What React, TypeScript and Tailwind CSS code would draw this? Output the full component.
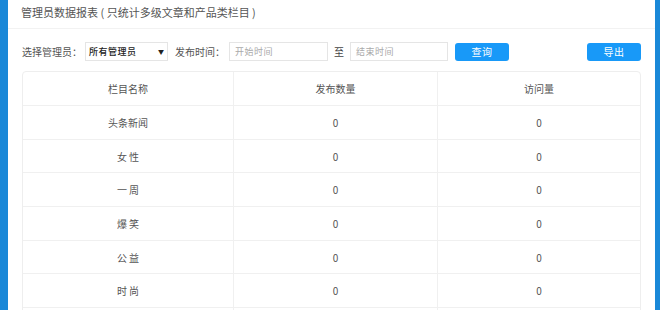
import React from "react";

const rows = [
  ["头条新闻", "0", "0"],
  ["女 性", "0", "0"],
  ["一 周", "0", "0"],
  ["爆 笑", "0", "0"],
  ["公 益", "0", "0"],
  ["时 尚", "0", "0"],
  ["", "", ""],
];

export default function App() {
  return (
    <div
      className="flex h-[310px] w-[660px] overflow-hidden bg-white"
      style={{ fontFamily: '"Noto Sans CJK SC", "Noto Sans", sans-serif' }}
    >
      <div className="w-[8px] shrink-0 bg-[#1a88d8]" />
      <div className="flex min-w-0 flex-1 flex-col bg-white">
        <div className="flex h-[29px] shrink-0 items-center border-b border-[#f2f2f2] pb-[4px] pl-[13px] text-[11px] text-[#555]">
          管理员数据报表 ( 只统计多级文章和产品类栏目 )
        </div>
        <div className="mt-[13px] flex h-[19px] shrink-0 items-center pl-[14px] pr-[14px] text-[10px] text-[#555]">
          <span className="w-[63px]">选择管理员：</span>
          <div className="flex h-[19px] w-[83px] items-center justify-between border border-[#e5e5e5] pl-[3px] pr-[3px] text-[9px] font-medium text-[#222]">
            <span className="tracking-[0.5px]">所有管理员</span>
            <span className="text-[6px]">▼</span>
          </div>
          <span className="ml-[7px] w-[54px]">发布时间：</span>
          <div className="flex h-[19px] w-[99px] items-center border border-[#e5e5e5] pl-[5px] text-[9px] tracking-[0.5px] text-[#aaa]">
            开始时间
          </div>
          <span className="ml-[6px] w-[16px] text-[#444]">至</span>
          <div className="flex h-[19px] w-[98px] items-center border border-[#e5e5e5] pl-[5px] text-[9px] tracking-[0.5px] text-[#aaa]">
            结束时间
          </div>
          <button className="ml-[7px] flex h-[18px] w-[54px] items-center justify-center rounded-[3px] bg-[#1899f8] text-[10px] tracking-[0.5px] text-white">
            查询
          </button>
          <button className="ml-auto flex h-[18px] w-[54px] items-center justify-center rounded-[3px] bg-[#1899f8] text-[10px] tracking-[0.5px] text-white">
            导出
          </button>
        </div>
        <div className="ml-[14px] mt-[10px] w-[619px] shrink-0 rounded-t-[4px] border border-[#eeeeee] text-[10px] text-[#555]">
          <div className="flex h-[34px] items-center border-b border-[#f0f0f0]">
            <div className="flex h-full w-[211px] items-center justify-center border-r border-[#f0f0f0]">栏目名称</div>
            <div className="flex h-full w-[204px] items-center justify-center border-r border-[#f0f0f0]">发布数量</div>
            <div className="flex h-full flex-1 items-center justify-center">访问量</div>
          </div>
          {rows.map((r, i) => (
            <div key={i} className="flex h-[33.7px] items-center border-b border-[#f0f0f0]">
              <div className="flex h-full w-[211px] items-center justify-center border-r border-[#f0f0f0] whitespace-pre">{r[0]}</div>
              <div className="flex h-full w-[204px] items-center justify-center border-r border-[#f0f0f0]">{r[1]}</div>
              <div className="flex h-full flex-1 items-center justify-center">{r[2]}</div>
            </div>
          ))}
        </div>
      </div>
      <div className="w-[5px] shrink-0 bg-[#1a88d8]" />
    </div>
  );
}
